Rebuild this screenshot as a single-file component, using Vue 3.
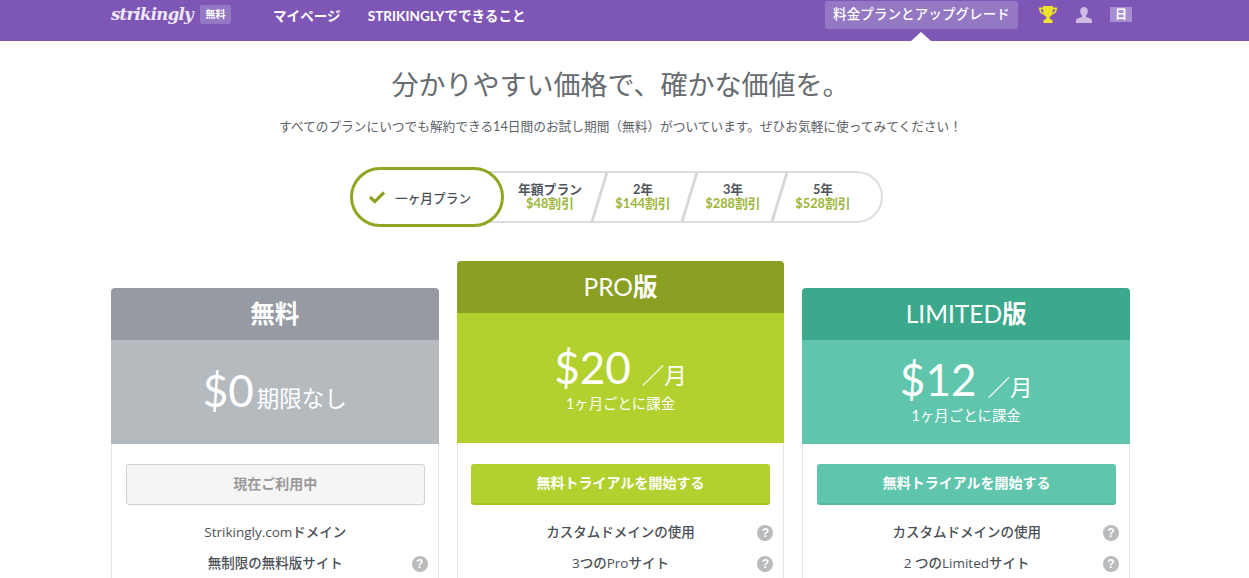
<template>
  <div class="page">
    <header class="topbar">
      <div class="topbar__inner">
        <div class="topbar__left">
          <span class="logo">strikingly</span>
          <span class="plan-tag">無料</span>
          <nav class="nav">
            <a class="nav__link">マイページ</a>
            <a class="nav__link">STRIKINGLYでできること</a>
          </nav>
        </div>
        <div class="topbar__right">
          <a class="upgrade">料金プランとアップグレード</a>
          <svg class="icon-trophy" width="18" height="18" viewBox="0 0 18 18">
            <path d="M4 0h10v1.500h4c0 4-1.500 6.500-5 7.200-.6 1-1.300 1.700-2.200 2.100v2.200c1.300.1 2.400.7 2.800 2V17H4.400v-2c.4-1.300 1.500-1.900 2.800-2v-2.200C6.300 10.400 5.600 9.700 5 8.700 1.500 8 0 5.500 0 1.500h4z M1.800 3.200c.2 1.900 1 3.100 2.800 3.700C4.200 5.800 4.100 4.600 4 3.200z M16.200 3.200H14c-.1 1.400-.2 2.600-.6 3.700 1.800-.6 2.600-1.800 2.800-3.700z" fill="#efe22a" fill-rule="evenodd" />
          </svg>
          <svg class="icon-user" width="18" height="18" viewBox="0 0 18 18">
            <path d="M9 1c2.500 0 3.800 1.800 3.800 4.200 0 1.800-.7 3.300-1.800 4.300v1.600c2.500.7 6 1.500 6 3.500V17H1v-2.400c0-2 3.500-2.800 6-3.500V9.500C5.900 8.500 5.200 7 5.200 5.200 5.200 2.800 6.500 1 9 1z" fill="#cdbbe6" />
          </svg>
          <span class="lang">日</span>
          <span class="caret"></span>
        </div>
      </div>
    </header>

    <main class="main">
      <h1 class="headline">分かりやすい価格で、確かな価値を。</h1>
      <p class="lead">すべてのプランにいつでも解約できる14日間のお試し期間（無料）がついています。ぜひお気軽に使ってみてください！</p>

      <div class="terms">
        <div class="terms__active">
          <svg width="18" height="14" viewBox="0 0 18 14">
            <path d="M2 7l4.800 4.600L16 2.500" fill="none" stroke="#8ba322" stroke-width="3.200" />
          </svg>
          <span>一ヶ月プラン</span>
        </div>
        <div class="terms__rest">
          <div v-for="t in terms" :key="t.name" class="term">
            <span class="term__name">{{ t.name }}</span>
            <span class="term__save">{{ t.save }}</span>
          </div>
        </div>
      </div>

      <section class="plans">
        <article v-for="p in plans" :key="p.id" class="plan" :class="'plan--' + p.id">
          <h2 class="plan__title">{{ p.title }}<b v-if="p.suffix">{{ p.suffix }}</b></h2>
          <div class="plan__price">
            <div class="price">
              <span class="price__num">{{ p.price }}</span>
              <span class="price__per">{{ p.per }}</span>
            </div>
            <div v-if="p.note" class="price__note">{{ p.note }}</div>
          </div>
          <div class="plan__body">
            <a class="plan__btn">{{ p.button }}</a>
            <ul class="features">
              <li v-for="f in p.features" :key="f.text" class="feature">
                <span>{{ f.text }}</span>
                <i v-if="f.help" class="help">?</i>
              </li>
            </ul>
          </div>
        </article>
      </section>
    </main>
  </div>
</template>

<script setup>
const terms = [
  { name: '年額プラン', save: '$48割引' },
  { name: '2年', save: '$144割引' },
  { name: '3年', save: '$288割引' },
  { name: '5年', save: '$528割引' },
]

const plans = [
  {
    id: 'free',
    title: '無料',
    price: '$0',
    per: '期限なし',
    button: '現在ご利用中',
    features: [
      { text: 'Strikingly.comドメイン' },
      { text: '無制限の無料版サイト', help: true },
    ],
  },
  {
    id: 'pro',
    title: 'PRO',
    suffix: '版',
    price: '$20',
    per: '／月',
    note: '1ヶ月ごとに課金',
    button: '無料トライアルを開始する',
    features: [
      { text: 'カスタムドメインの使用', help: true },
      { text: '3つのProサイト', help: true },
    ],
  },
  {
    id: 'limited',
    title: 'LIMITED',
    suffix: '版',
    price: '$12',
    per: '／月',
    note: '1ヶ月ごとに課金',
    button: '無料トライアルを開始する',
    features: [
      { text: 'カスタムドメインの使用', help: true },
      { text: '2 つのLimitedサイト', help: true },
    ],
  },
]
</script>

<style>
html,
body {
  margin: 0;
  height: 578px;
  overflow: hidden;
  background: #fff;
}
</style>

<style scoped>
.page {
  font-family: Lato, "Noto Sans CJK JP", sans-serif;
  color: #50555c;
  height: 578px;
  overflow: hidden;
}
.topbar {
  height: 41px;
  background: #7e57b6;
  color: #fff;
}
.topbar__inner {
  width: 1020px;
  margin-left: 111px;
  display: flex;
  justify-content: space-between;
}
.topbar__left,
.topbar__right {
  display: flex;
  align-items: center;
  height: 29px;
}
.logo {
  font-family: "DejaVu Serif", serif;
  font-style: italic;
  font-weight: 700;
  font-size: 16.5px;
  letter-spacing: -0.7px;
  color: #eee8f6;
  width: 83px;
  line-height: 26px;
}
.plan-tag {
  width: 31px;
  height: 19px;
  margin-left: 6px;
  border-radius: 2px;
  background: #9478c4;
  font-size: 10px;
  font-weight: 700;
  line-height: 19px;
  text-align: center;
}
.nav {
  display: flex;
  gap: 27px;
  margin-left: 42px;
  font-size: 13.6px;
  font-weight: 700;
}
.topbar__right {
  position: relative;
}
.upgrade {
  background: #9478c4;
  border-radius: 3px;
  width: 193px;
  height: 28px;
  margin-top: 1px;
  line-height: 27px;
  text-align: center;
  font-size: 13.5px;
  font-weight: 500;
  letter-spacing: 0.1px;
}
.icon-trophy {
  margin-left: 21px;
}
.icon-user {
  margin-left: 18px;
}
.lang {
  width: 22px;
  height: 15px;
  margin-left: 17px;
  margin-right: -1px;
  background: #a68fd0;
  font-size: 12px;
  font-weight: 700;
  line-height: 15px;
  text-align: center;
}
.caret {
  position: absolute;
  left: 86px;
  top: 32px;
  border-left: 10px solid transparent;
  border-right: 10px solid transparent;
  border-bottom: 9px solid #fff;
}

.main {
  box-sizing: border-box;
  padding-right: 8px;
  display: flex;
  flex-direction: column;
  align-items: center;
}
.headline {
  margin: 25px 0 0;
  font-size: 27px;
  line-height: 38px;
  font-weight: 400;
  color: #666b70;
}
.lead {
  margin: 12px 0 0;
  font-size: 12.7px;
  line-height: 20px;
  color: #5d6268;
}

.terms {
  display: flex;
  align-items: center;
  margin: 31px 8px 0 0;
  width: 533px;
  height: 60px;
}
.terms__active {
  flex: none;
  width: 154px;
  height: 60px;
  box-sizing: border-box;
  border: 3px solid #8ea824;
  border-radius: 30px;
  background: #fff;
  display: flex;
  align-items: center;
  gap: 9px;
  padding-left: 15px;
  font-size: 12.7px;
  font-weight: 500;
  color: #4b5057;
  position: relative;
  z-index: 1;
}
.terms__rest {
  flex: 1;
  height: 52px;
  box-sizing: border-box;
  margin-left: -24px;
  padding: 0 13px 0 28px;
  border: 2px solid #dcdddf;
  border-left: 0;
  border-radius: 0 26px 26px 0;
  display: flex;
  align-items: center;
}
.term {
  position: relative;
  flex: none;
  width: 90px;
  height: 48px;
  box-sizing: border-box;
  padding-bottom: 2px;
  display: flex;
  flex-direction: column;
  align-items: center;
  justify-content: center;
  font-size: 12.8px;
  line-height: 14px;
  font-weight: 700;
}
.term:first-child {
  padding-right: 6px;
}
.term + .term::before {
  content: "";
  position: absolute;
  left: 0;
  top: 0;
  height: 48px;
  width: 3px;
  background: #d6d7d9;
  transform: skewX(-17deg);
}
.term__name {
  color: #50555c;
}
.term__save {
  color: #9cb53a;
}

.plans {
  width: 1019px;
  margin-top: 34px;
  display: grid;
  grid-template-columns: repeat(3, 1fr);
  column-gap: 18px;
  align-items: start;
}
.plan__title {
  margin: 0;
  height: 52px;
  border-radius: 4px 4px 0 0;
  font-size: 24.5px;
  line-height: 52px;
  font-weight: 400;
  color: #fff;
  text-align: center;
}
.plan__title b {
  font-weight: 700;
}
.plan__price {
  height: 104px;
  box-sizing: border-box;
  color: #fff;
  text-align: center;
}
.price {
  display: flex;
  align-items: baseline;
  justify-content: center;
}
.price__num {
  font-size: 44px;
  font-weight: 400;
  line-height: 54px;
}
.price__per {
  font-size: 22.5px;
  font-weight: 400;
  margin-left: 11px;
}
.price__note {
  font-size: 14.4px;
  line-height: 20px;
  font-weight: 400;
}
.plan__body {
  border: 1px solid #e6e7e8;
  border-top: 0;
  height: 300px;
  padding: 20px 13px 0 14px;
}
.plan__btn {
  display: block;
  height: 41px;
  box-sizing: border-box;
  border-radius: 3px;
  line-height: 38px;
  text-align: center;
  font-size: 14px;
  font-weight: 700;
  color: #fff;
}
.features {
  list-style: none;
  margin: 12px 0 0;
  padding: 0;
}
.feature {
  position: relative;
  height: 31px;
  line-height: 31px;
  text-align: center;
  font-family: "Open Sans", "Noto Sans CJK JP", sans-serif;
  font-size: 13.5px;
  font-weight: 500;
  color: #4b5057;
}
.help {
  position: absolute;
  right: -3px;
  top: 8px;
  width: 16px;
  height: 16px;
  border-radius: 50%;
  background: #b9bbbd;
  color: #fff;
  font-family: "Liberation Sans", sans-serif;
  font-style: normal;
  font-weight: 700;
  font-size: 12px;
  line-height: 16px;
  text-align: center;
}

.plan--free {
  margin-top: 27px;
}
.plan--free .plan__title {
  background: #969ba3;
  font-weight: 700;
}
.plan--free .plan__price {
  background: #b5babf;
  padding-top: 23px;
}
.plan--free .price__per {
  margin-left: 3px;
}
.plan--free .plan__btn {
  background: #f5f5f5;
  border: 1px solid #cfd1d3;
  color: #999;
}

.plan--pro .plan__title {
  background: #8ba022;
}
.plan--pro .plan__price {
  height: 130px;
  background: #b2d12f;
  padding-top: 27px;
}
.plan--pro .plan__body {
  padding: 21px 13px 0;
}
.plan--pro .plan__btn {
  background: #b2d12f;
  border-bottom: 2px solid #a5c22a;
}

.plan--limited {
  margin-top: 27px;
}
.plan--limited .plan__title {
  background: #3ca88c;
}
.plan--limited .plan__price {
  background: #5fc5ad;
  padding-top: 12px;
}
.plan--limited .plan__btn {
  background: #5fc5ad;
  border-bottom: 2px solid #55b79f;
}
</style>
